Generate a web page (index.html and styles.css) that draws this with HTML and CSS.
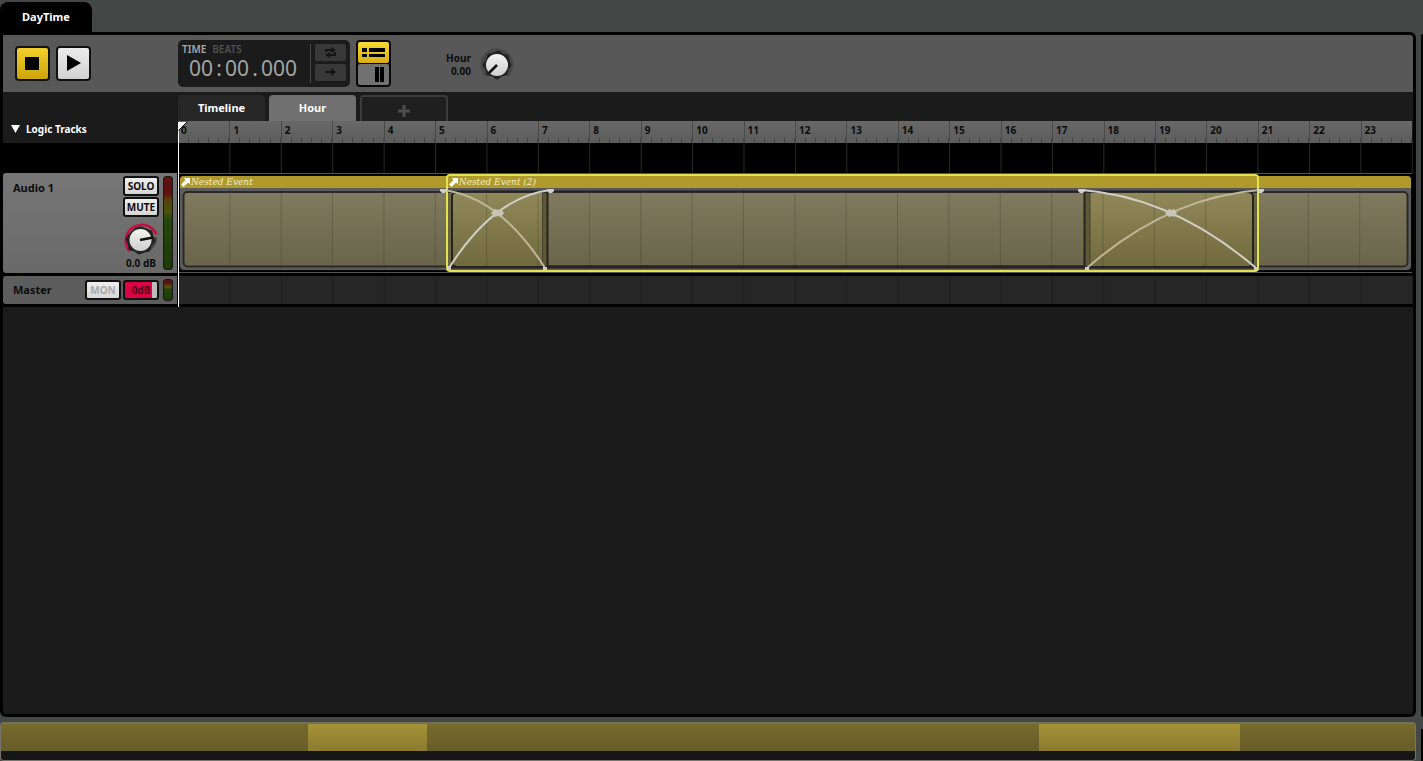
FILE: index.html
```
<!DOCTYPE html>
<html lang="en">
<head>
<meta charset="utf-8">
<title>DayTime</title>
<link rel="stylesheet" href="styles.css">
</head>
<body>
<svg class="defs" aria-hidden="true">
  <defs>
    <linearGradient id="knob" x1="0" y1="0" x2="0" y2="1"><stop offset="0" stop-color="#f2f2f2"/><stop offset="1" stop-color="#cfcfcf"/></linearGradient>
    <linearGradient id="body" x1="0" y1="0" x2="0" y2="1"><stop offset="0" stop-color="#807a5e"/><stop offset="1" stop-color="#69654b"/></linearGradient>
    <linearGradient id="overlap" x1="0" y1="0" x2="0" y2="1"><stop offset="0" stop-color="#91885a"/><stop offset="1" stop-color="#716a3e"/></linearGradient>
  </defs>
</svg>
<div class="app">
  <nav class="docs"><button class="doc">DayTime</button></nav>
  <div class="workspace">
    <main class="editor">
      <header class="toolbar">
        <div class="transport">
          <button class="key key-stop" aria-label="Stop"><svg width="31" height="31"><path d="M8 9h14v13H8z"/></svg></button>
          <button class="key" aria-label="Play"><svg width="31" height="31"><path d="M9 7l14 8-14 8z"/></svg></button>
        </div>
        <div class="clock">
          <div class="readout">
            <div class="modes"><button class="mode mode-on">TIME</button><button class="mode">BEATS</button></div>
            <div class="digits"><span>00</span><span class="sep">:</span><span>00</span><span class="sep">.</span><span>000</span></div>
          </div>
          <div class="clock-keys">
            <button class="mini" aria-label="Loop"><svg width="31" height="17" fill="none" stroke="#151515" stroke-width="2"><path d="M11 8V6h6M20 8v3h-6"/><path fill="#151515" stroke="none" d="M16 3l5 3-5 3zM15 8l-5 3 5 3z"/></svg></button>
            <button class="mini" aria-label="Follow"><svg width="31" height="17"><path fill="#151515" d="M10 7h6V4l5 4-5 4V9h-6z"/></svg></button>
          </div>
        </div>
        <div class="views">
          <button class="view view-on" aria-label="Track view"><svg width="31" height="21"><path d="M4 6h5v4H4zM11 6h16v4H11zM4 12h5v3H4zM11 12h16v3H11z"/></svg></button>
          <button class="view" aria-label="Mixer view"><svg width="31" height="21"><path d="M17 3h4v15h-4zM22 3h4v15h-4z"/></svg></button>
        </div>
        <div class="param">
          <div class="param-text"><span>Hour</span><span>0.00</span></div>
          <svg width="36" height="36" viewBox="0 0 36 36"><path d="M7 30A16.500 16.500 0 1 1 29 30L25 25H11z" fill="#484848"/><path d="M10 8l5-1 5-2 3 3 5 1 1 5 2 4-3 4-1 5-5 1-4 3-4-3-5-1-1-5-3-4 3-4z" fill="#222" stroke="#222" stroke-width="3" stroke-linejoin="round"/><circle cx="18" cy="18" r="11" fill="url(#knob)"/><path d="M18 18l-8 8" stroke="#111" stroke-width="2.500"/></svg>
        </div>
      </header>

      <section class="timeline">
        <div class="logic"><button class="fold"><svg width="9" height="8"><path fill="#fff" d="M0 0h9L4.500 8z"/></svg>Logic Tracks</button></div>
        <div class="sheet-area">
          <div class="sheets">
            <button class="sheet">Timeline</button><button class="sheet sheet-on">Hour</button>
            <button class="sheet sheet-add" aria-label="Add sheet"><svg width="12" height="12"><path fill="#4c4c4c" d="M4.500 0h3v4.500H12v3H7.500V12h-3V7.500H0v-3h4.500z"/></svg></button>
          </div>
          <div class="ruler"><span>0</span><span>1</span><span>2</span><span>3</span><span>4</span><span>5</span><span>6</span><span>7</span><span>8</span><span>9</span><span>10</span><span>11</span><span>12</span><span>13</span><span>14</span><span>15</span><span>16</span><span>17</span><span>18</span><span>19</span><span>20</span><span>21</span><span>22</span><span>23</span></div>
        </div>
        <div class="logic-head"></div>
        <div class="logic-lane"></div>

        <div class="head audio">
          <span class="name">Audio 1</span>
          <div class="controls">
            <button class="chip">SOLO</button>
            <button class="chip">MUTE</button>
            <svg width="36" height="36" viewBox="0 0 36 36"><path d="M28 29A15.500 15.500 0 0 0 34 16L26 17z" fill="#454545"/><path d="M6.500 30A16 16 0 1 1 33.500 13.500" fill="none" stroke="#c60d48" stroke-width="2.500"/><path d="M13 8l5-1 5 2 5 2 1 5 2 4-4 4-1 5-5 1-5 2-4-3-5-1-1-5-2-5 3-4z" fill="#222" stroke="#222" stroke-width="3" stroke-linejoin="round"/><circle cx="17.500" cy="19" r="11" fill="url(#knob)"/><path d="M17 19l13-2.500" stroke="#111" stroke-width="2.500"/></svg>
            <span class="db">0.0 dB</span>
          </div>
          <div class="meter"></div>
        </div>
        <div class="lane audio-lane">
          <div class="event event-one"><div class="title"><svg width="9" height="9"><path fill="#fff" d="M3 0h6v6L7 4.500 2.500 9 0 6.500 4.500 2z"/></svg>Nested Event</div></div>
          <svg class="curves" viewBox="178 173 1234 100" preserveAspectRatio="none">
            <rect x="183.500" y="192" width="1224" height="74.500" rx="4" fill="url(#body)" stroke="#2b2a26" stroke-width="2"/>
            <path d="M447 190.500h811M447 267h811" stroke="#242321" stroke-width="3"/>
            <rect x="452" y="193" width="95" height="73" fill="url(#overlap)"/>
            <rect x="1085" y="193" width="168" height="73" fill="url(#overlap)"/>
            <path d="M542 193h5v73h-5zM1085 193h5v73h-5z" fill="#5d5938"/>
            <path d="M542.500 192v74M1090 192v74" stroke="#464229"/>
            <path d="M456 192.500q-4 0-4 4v66q0 4 4 4M547.500 192v75M1084.500 192v75M1249 192.500q4 0 4 4v66q0 4-4 4" fill="none" stroke="#26251d" stroke-width="2"/>
            <path d="M448 193h3v73h-3zM1254 193h3v73h-3z" fill="#68643f"/>
            <path d="M448 189.500h809" stroke="#55545a" stroke-width="2"/>
          </svg>
          <div class="grid-overlay"></div>
          <div class="event event-two"><div class="title"><svg width="9" height="9"><path fill="#fff" d="M3 0h6v6L7 4.500 2.500 9 0 6.500 4.500 2z"/></svg>Nested Event (2)</div></div>
          <svg class="curves" viewBox="178 173 1234 100" preserveAspectRatio="none">
            <g fill="none" stroke-width="2"><path stroke="#bdb797" d="M443 190Q500 197 545 268M1087 268Q1168 197 1260 190"/><path stroke="#d2cec4" d="M449 268Q494 197 550 190M1082 190Q1173 197 1256 268"/></g>
            <g fill="#d2cec6"><path d="M440 189h7v2l-2 2h-3l-2-2zM547 189h7v2l-2 2h-3l-2-2zM1078 189h7v2l-2 2h-3l-2-2zM1257 189h7v2l-2 2h-3l-2-2z"/><path d="M448 266h3v4h-3zM543 267h4v3h-4zM1085 267h4v3h-4zM1254 267h3v3h-3z"/><path fill="#c8c5b6" d="M491 213l4-4 3 1 3-1 3 4-3 4-3-1-3 1zM1165 213l4-4 3 1 2-1 3 4-3 4-2-1-3 1z"/></g>
          </svg>
        </div>

        <div class="head master">
          <span class="name">Master</span>
          <div class="master-keys"><button class="chip chip-off">MON</button><button class="chip chip-level">0dB</button></div>
          <div class="meter"></div>
        </div>
        <div class="lane master-lane"></div>
        <svg class="playhead" width="10" height="186"><path fill="#fff" d="M0 1h9L1 9v177H0z"/><path d="M9.500.5l-9 9" stroke="#111"/></svg>
      </section>
      <div class="empty"></div>
    </main>
    <aside class="neighbour"></aside>
  </div>
  <footer class="footer"><div class="overview"><div class="range range-one"></div><div class="range range-two"></div></div><div class="neighbour-foot"></div></footer>
</div>
</body>
</html>
```
FILE: styles.css
```
* { box-sizing: border-box; }
body { margin: 0; background: #434746; font-family: "Noto Sans", "Open Sans", sans-serif; font-weight: 700; font-size: 11px; line-height: 14px; color: #0c0c0c; }
button { font: inherit; color: inherit; margin: 0; padding: 0; border: 0; background: none; display: flex; align-items: center; justify-content: center; }
svg { display: block; flex: none; }
.defs { position: absolute; width: 0; height: 0; }
.app { display: flex; flex-direction: column; min-height: 100vh; }
.docs { padding-top: 2px; display: flex; }
.doc { background: #000; color: #fff; border-radius: 8px 8px 0 0; height: 30px; padding: 0 22px; }
.workspace { display: flex; flex: 1; gap: 5px; }
.editor { flex: 1; min-width: 0; display: flex; flex-direction: column; background: #000; border: 3px solid #000; border-radius: 0 6px 6px 6px; }
.neighbour { width: 2px; background: #000; border-radius: 4px 0 0 4px; margin-top: 2px; }

.toolbar { display: flex; align-items: center; background: #585858; height: 57px; border-radius: 0 3px 0 0; }
.transport { display: flex; gap: 6px; width: 175px; padding-left: 12px; }
.key { width: 35px; height: 35px; border: 2px solid #111; border-radius: 4px; background: linear-gradient(#ececec, #d2d2d2); }
.key-stop { background: linear-gradient(#f4cf2c, #cda50c); }
.clock { display: flex; background: #1b1b1b; border-radius: 5px; width: 172px; height: 47px; padding: 4px; }
.readout { flex: 1; border-right: 1px solid #4a4a4a; }
.modes { display: flex; gap: 6px; font-size: 10px; line-height: 10px; color: #505050; font-weight: 600; }
.mode-on { color: #a8a8a8; }
.digits { display: flex; font-weight: 400; font-size: 21px; line-height: 24px; margin-top: 2px; padding-left: 7px; color: #a4a4a4; }
.sep { width: 12px; text-align: center; }
.clock-keys { display: flex; flex-direction: column; gap: 3px; padding-left: 4px; }
.mini { width: 31px; height: 17px; background: #383838; border-radius: 2px; }
.views { margin-left: 6px; width: 35px; border: 2px solid #080808; border-radius: 4px; background: #080808; display: flex; flex-direction: column; gap: 1px; }
.view { height: 21px; background: #727272; border-radius: 2px; }
.view-on { background: linear-gradient(#f6d934, #d8ae14); }
.param { display: flex; align-items: center; gap: 8px; margin-left: 55px; padding-top: 2px; }
.param-text { display: flex; flex-direction: column; align-items: flex-end; line-height: 13px; font-size: 10px; }

.timeline { position: relative; display: grid; grid-template-columns: 175px 1fr; background: #000; }
.logic { background: #1b1b1b; display: flex; align-items: flex-end; padding: 0 0 7px 8px; }
.fold { gap: 6px; color: #fff; font-size: 10px; }
.sheet-area { background: #1b1b1b; padding-top: 3px; }
.sheets { display: flex; gap: 4px; height: 26px; }
.sheet { width: 87px; background: #272727; color: #fff; border-radius: 4px 4px 0 0; font-size: 11px; }
.sheet-on { background: #707070; }
.sheet-add { width: 88px; border: 2px solid #3c3c3c; border-bottom: 0; background: #1f1f1f; padding-top: 3px; }
.ruler { display: grid; grid-template-columns: repeat(24, 1fr); height: 22px; margin-right: 1px; background: linear-gradient(#686868, #5c5c5c); font-size: 10px; line-height: 18px; }
.ruler span { padding-left: 3px; border-left: 1px solid #4a4a4a; background: repeating-linear-gradient(90deg, transparent 0 calc(20% - 1px), #444 calc(20% - 1px) 20%) bottom / 100% 5px no-repeat; }
.ruler span:first-child { padding-left: 2px; }
.logic-lane, .grid-overlay, .master-lane { background-image: linear-gradient(90deg, var(--line) 1px, transparent 1px); background-size: calc((100% - 1px) / 24) 100%; }
.logic-lane { --line: #292929; height: 30px; }
.head { display: flex; border-radius: 3px 0 0 3px; padding-left: 10px; margin-right: 1px; }
.audio { height: 100px; background: linear-gradient(#767676, #696969); }
.name { flex: 1; }
.audio .name { padding-top: 8px; }
.controls { display: flex; flex-direction: column; align-items: center; padding-top: 3px; }
.chip { width: 36px; height: 20px; border: 2px solid #111; border-radius: 3px; background: linear-gradient(#eee, #d6d6d6); font-size: 10px; margin-bottom: 1px; }
.controls svg { margin-top: 3px; }
.db { font-size: 10px; margin-top: -1px; }
.meter { width: 10px; margin: 3px 4px; border: 1px solid #181818; border-radius: 3px; background: linear-gradient(#5b1211 0 18%, #58410d 25%, #4d510f 38%, #26460c 46%, #1d380a); }
.lane { position: relative; }
.audio-lane { height: 100px; margin-right: 1px; border: 1px solid #555; border-width: 1px 0; }
.event { position: absolute; overflow: hidden; }
.event-one { inset: 1px 0 1px 1px; background: #5c5c5c; border: 1px solid #080808; border-radius: 5px; }
.event-two { left: 21.700%; width: 65.900%; top: 0; bottom: 0; border: 2px solid #e3e250; border-radius: 4px; }
.title { display: flex; align-items: center; gap: 1px; height: 12px; padding-left: 1px; background: #b09a2c; color: #f4ecc4; font: italic 400 10px/12px "DejaVu Serif Condensed", "DejaVu Serif", serif; white-space: nowrap; }
.curves { position: absolute; left: 0; top: -1px; width: 100%; height: 100px; }
.grid-overlay { --line: rgba(30, 28, 10, .22); position: absolute; inset: 16px 0 3px; }
.master { height: 28px; margin-top: 3px; align-items: center; background: #5d5d5d; }
.master-keys { display: flex; gap: 2px; }
.master-keys .chip { margin: 0; }
.chip-off { color: #aaa; }
.chip-level { background: linear-gradient(90deg, #dc0044 84%, #bbb 84%); color: #4e0019; }
.master .meter { height: 22px; }
.master-lane { --line: #1d1d1d; background-color: #262626; height: 28px; margin-top: 3px; }
.playhead { position: absolute; left: 175px; top: 29px; }
.empty { flex: 1; margin-top: 3px; background: #1b1b1b; border-radius: 0 0 3px 3px; }

.footer { display: flex; gap: 5px; height: 44px; padding-top: 5px; }
.overview { position: relative; flex: 1; border: 1px solid #77756a; border-top: 2px solid #746f55; border-radius: 4px; background: linear-gradient(#766b2d, #665c29) top / 100% 27px no-repeat #161616; }
.range { position: absolute; top: 0; height: 27px; background: linear-gradient(#a59238, #8b7b31); }
.range-one { left: 21.700%; width: 8.400%; }
.range-two { left: 73.400%; width: 14.200%; }
.neighbour-foot { width: 2px; margin-top: 7px; background: #000; }
```
